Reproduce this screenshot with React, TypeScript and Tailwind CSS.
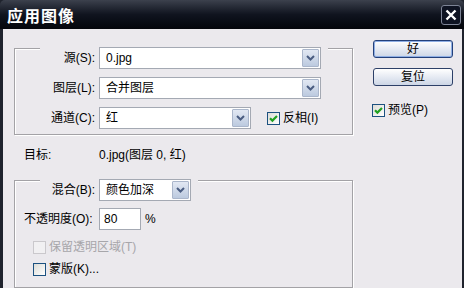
import React from 'react';

const FONT = "font-['Liberation_Sans','Noto_Sans_CJK_SC',sans-serif]";

const Chevron = () => (
  <svg width="9" height="6" viewBox="0 0 9 6">
    <path d="M1 1 L4.5 4.5 L8 1" fill="none" stroke="#4a5d82" strokeWidth="2" />
  </svg>
);

const Select: React.FC<{ value: string; width: string }> = ({ value, width }) => (
  <div className={`${width} h-[22px] flex bg-white border border-[#a4a9b3]`}>
    <span className="flex-1 pl-[6px] leading-[20px] text-black">{value}</span>
    <div className="w-[17px] m-[1px] flex items-center justify-center border border-[#aab6cb] rounded-[1px] bg-gradient-to-b from-[#e2e8f3] to-[#bccadf]">
      <Chevron />
    </div>
  </div>
);

const Check: React.FC<{ label: string; checked?: boolean; disabled?: boolean }> = ({ label, checked, disabled }) => (
  <div className="flex items-center h-[16px] gap-[3px]">
    <div
      className={
        disabled
          ? 'w-[13px] h-[13px] border border-[#cac8cc] bg-[#f1f0f2]'
          : 'w-[13px] h-[13px] border border-[#1c5180] bg-gradient-to-br from-[#dcdcd7] to-white flex items-center justify-center'
      }
    >
      {checked && (
        <svg width="9" height="9" viewBox="0 0 9 9">
          <path d="M1 4.2 L3.4 6.6 L8 2" fill="none" stroke="#21a121" strokeWidth="2.2" />
        </svg>
      )}
    </div>
    <span className={disabled ? 'text-[#a7a6aa]' : 'text-black'}>{label}</span>
  </div>
);

const Group: React.FC<{ children: React.ReactNode; className?: string }> = ({ children, className }) => (
  <div className={`w-[339px] border border-[#a3a2a6] shadow-[1px_1px_0_#fff,inset_1px_1px_0_#fff] ${className ?? ''}`}>
    {children}
  </div>
);

const Button: React.FC<{ label: string; primary?: boolean }> = ({ label, primary }) => (
  <div
    className={
      primary
        ? 'w-[80px] h-[18px] rounded-[3px] border border-[#23407a] shadow-[inset_0_0_0_1px_#8eaee4] bg-gradient-to-b from-white to-[#cdd6e6] flex items-center justify-center text-black'
        : 'w-[80px] h-[18px] rounded-[3px] border border-[#2d4068] bg-gradient-to-b from-white to-[#cdd6e6] flex items-center justify-center text-black'
    }
  >
    {label}
  </div>
);

export default function App() {
  return (
    <div className={`w-[464px] h-[288px] bg-[#1f232d] flex flex-col text-[12px] ${FONT}`}>
      {/* Title bar */}
      <div className="h-[29px] shrink-0 rounded-t-[5px] bg-gradient-to-b from-[#3c414d] via-[#10141f] to-[#04060b] flex items-center justify-between pl-[7px] pr-[3px]">
        <span className="text-white font-bold text-[16px] tracking-[1px] font-['Noto_Sans_CJK_SC',sans-serif]">应用图像</span>
        <div className="w-[20px] h-[20px] rounded-[3px] border border-[#7d8496] bg-[#0e1322] flex items-center justify-center">
          <svg width="12" height="12" viewBox="0 0 12 12">
            <path d="M1.5 1.5 L10.5 10.5 M10.5 1.5 L1.5 10.5" stroke="#fff" strokeWidth="2.4" />
          </svg>
        </div>
      </div>

      {/* Body */}
      <div className="flex-1 ml-[3px] mr-[2px] mb-[4px] bg-[#ebe9ed] flex">
        {/* Left column */}
        <div className="pl-[11px] pt-[19px] flex flex-col">
          <Group className="pb-[5px]">
            <div className="-mt-[10px] ml-[25px] pr-[7px] self-start inline-flex items-center bg-[#ebe9ed]">
              <span className="w-[55px] text-right">源(S):</span>
              <div className="ml-[4px]">
                <Select value="0.jpg" width="w-[222px]" />
              </div>
            </div>
            <div className="mt-[8px] ml-[25px] flex items-center">
              <span className="w-[55px] text-right">图层(L):</span>
              <div className="ml-[4px]">
                <Select value="合并图层" width="w-[222px]" />
              </div>
            </div>
            <div className="mt-[8px] ml-[25px] flex items-center">
              <span className="w-[55px] text-right">通道(C):</span>
              <div className="ml-[4px]">
                <Select value="红" width="w-[152px]" />
              </div>
              <div className="ml-[16px]">
                <Check label="反相(I)" checked />
              </div>
            </div>
          </Group>

          <div className="mt-[12px] ml-[10px] flex h-[16px] items-center">
            <span className="w-[75px]">目标:</span>
            <span>0.jpg(图层 0, 红)</span>
          </div>

          <Group className="mt-[17px] pb-[10px]">
            <div className="-mt-[10px] ml-[25px] pr-[7px] self-start inline-flex items-center bg-[#ebe9ed]">
              <span className="w-[55px] text-right">混合(B):</span>
              <div className="ml-[4px]">
                <Select value="颜色加深" width="w-[92px]" />
              </div>
            </div>
            <div className="mt-[7px] ml-[9px] flex items-center">
              <span className="w-[75px]">不透明度(O):</span>
              <div className="w-[42px] h-[22px] bg-white border border-[#a4a9b3] pl-[4px] leading-[20px]">80</div>
              <span className="ml-[4px]">%</span>
            </div>
            <div className="mt-[9px] ml-[18px]">
              <Check label="保留透明区域(T)" disabled />
            </div>
            <div className="mt-[6px] ml-[18px]">
              <Check label="蒙版(K)..." />
            </div>
          </Group>
        </div>

        {/* Right column */}
        <div className="ml-[20px] pt-[11px] flex flex-col">
          <Button label="好" primary />
          <div className="mt-[10px]">
            <Button label="复位" />
          </div>
          <div className="mt-[16px] -ml-[1px]">
            <Check label="预览(P)" checked />
          </div>
        </div>
      </div>
    </div>
  );
}
